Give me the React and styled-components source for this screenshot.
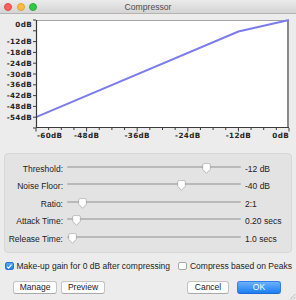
import React from "react";
import styled, { createGlobalStyle } from "styled-components";

const GlobalStyle = createGlobalStyle`
  html, body {
    margin: 0;
    padding: 0;
    background: #ececec;
  }
  * {
    box-sizing: border-box;
  }
`;

const Window = styled.div`
  position: relative;
  width: 296px;
  height: 300px;
  background: #ececec;
  overflow: hidden;
  font-family: "Liberation Sans", Arial, sans-serif;
  font-size: 8.5px;
  color: #222;
`;

const TitleBar = styled.div`
  display: grid;
  grid-template-columns: 1fr auto 1fr;
  align-items: center;
  height: 14px;
  background: linear-gradient(#ebebeb, #d4d4d4);
  border-bottom: 1px solid #b4b4b4;
  border-radius: 4px 4px 0 0;
`;

const Lights = styled.div`
  display: flex;
  gap: 4.5px;
  padding-left: 4px;
`;

const Light = styled.span`
  width: 8px;
  height: 8px;
  border-radius: 50%;
  background: ${(p) => p.color};
  border: 0.5px solid ${(p) => p.edge};
`;

const Title = styled.div`
  font-size: 8.6px;
  color: #4d4d4d;
`;

const Chart = styled.svg`
  display: block;
`;

const GroupBox = styled.div`
  display: grid;
  grid-template-columns: 58px 174px auto;
  grid-auto-rows: 17.5px;
  column-gap: 4px;
  align-items: center;
  height: 100px;
  margin: 2px 4px 0;
  padding-top: 6px;
  background: #e3e3e3;
  border: 1px solid #d7d7d7;
  border-radius: 4px;
`;

const SliderLabel = styled.div`
  text-align: right;
  white-space: nowrap;
`;

const Track = styled.div`
  position: relative;
  height: 100%;
  &::before {
    content: "";
    position: absolute;
    left: 0;
    right: 0;
    top: calc(50% - 3px);
    height: 2px;
    border-radius: 1px;
    background: #b9b9b9;
  }
`;

const Thumb = styled.svg`
  position: absolute;
  top: calc(50% - 6px);
  margin-left: -4.5px;
  filter: drop-shadow(0 0.5px 0.6px rgba(0, 0, 0, 0.35));
`;

const Value = styled.div`
  white-space: nowrap;
`;

const CheckRow = styled.div`
  display: flex;
  justify-content: space-between;
  align-items: center;
  height: 12px;
  margin-top: 7px;
  padding: 0 4px 0 5px;
`;

const CheckItem = styled.label`
  display: flex;
  align-items: center;
  gap: 3px;
  white-space: nowrap;
`;

const Box = styled.span`
  display: flex;
  align-items: center;
  justify-content: center;
  width: 8.5px;
  height: 8.5px;
  border-radius: 2px;
  background: ${(p) => (p.checked ? "linear-gradient(#5aa7f8, #2a7ef1)" : "#fff")};
  border: 0.5px solid ${(p) => (p.checked ? "#2a72d8" : "#a8a8a8")};
`;

const ButtonRow = styled.div`
  display: flex;
  justify-content: space-between;
  margin-top: 9px;
  padding: 0 15px 0 13px;
`;

const ButtonGroup = styled.div`
  display: flex;
  gap: ${(p) => p.gap}px;
`;

const Button = styled.button`
  width: ${(p) => p.w}px;
  height: 12.5px;
  padding: 0;
  font-family: "Liberation Sans", Arial, sans-serif;
  font-size: 8.5px;
  line-height: 11px;
  color: ${(p) => (p.primary ? "#fff" : "#222")};
  background: ${(p) =>
    p.primary ? "linear-gradient(#6cb1f9, #1a7ef4)" : "#fff"};
  border: 0.5px solid ${(p) => (p.primary ? "#2f80ea" : "#c4c4c4")};
  border-bottom-color: ${(p) => (p.primary ? "#1d6ad6" : "#aaa")};
  border-radius: 3px;
`;

const Grip = styled.svg`
  position: absolute;
  right: 0;
  bottom: 0;
`;

const X0 = 36;
const X1 = 289;
const Y0 = 20;
const Y1 = 128;
const xOf = (db) => X0 + ((db + 60) / 60) * (X1 - X0);
const yOf = (db) => Y0 + (-db / 60) * (Y1 - Y0);

function CurveChart() {
  const yTicks = [];
  for (let d = 0; d >= -60; d -= 6) yTicks.push(d);
  const xTicks = [];
  for (let d = -60; d <= 0; d += 3) xTicks.push(d);
  const yLabels = [-12, -18, -24, -30, -36, -42, -48, -54];
  const xLabels = [-60, -48, -36, -24, -12, 0];
  const labelStyle = {
    fontFamily: '"DejaVu Sans", Verdana, sans-serif',
    fontWeight: "bold",
    fontSize: "7.2px",
    letterSpacing: "0.35px",
    fill: "#262626",
  };
  const pts = [
    [xOf(-60), yOf(-54)],
    [xOf(-12), yOf(-6.4)],
    [xOf(0), yOf(0)],
  ]
    .map((p) => p.join(","))
    .join(" ");

  return (
    <Chart width="296" height="137" viewBox="0 14 296 137">
      <rect x={X0} y={Y0} width={X1 - X0} height={Y1 - Y0} fill="#fff" />
      <line x1={X0} y1={Y0 + 0.5} x2={X1} y2={Y0 + 0.5} stroke="#a3a3a3" />
      <line x1={X1 - 1} y1={Y0} x2={X1 - 1} y2={Y1} stroke="#8a8a8a" strokeWidth="2" />
      <polyline points={pts} fill="none" stroke="#7c7cee" strokeWidth="2" />
      <line x1={X0 + 0.5} y1={Y0} x2={X0 + 0.5} y2={Y1} stroke="#3a3a3a" strokeWidth="1.2" />
      <line x1={X0} y1={Y1 - 0.5} x2={X1} y2={Y1 - 0.5} stroke="#3a3a3a" strokeWidth="1.2" />
      {yTicks.map((d) => (
        <line key={d} x1={X0 - 3} y1={yOf(d)} x2={X0} y2={yOf(d)} stroke="#3a3a3a" />
      ))}
      {xTicks.map((d) => (
        <line
          key={d}
          x1={xOf(d)}
          y1={Y1}
          x2={xOf(d)}
          y2={Y1 + (d % 12 === 0 ? 3.5 : 2)}
          stroke="#3a3a3a"
        />
      ))}
      <text x="32" y="26.5" textAnchor="end" style={labelStyle}>0dB</text>
      {yLabels.map((d) => (
        <text key={d} x="32" y={yOf(d) + 2.6} textAnchor="end" style={labelStyle}>
          {d}dB
        </text>
      ))}
      {xLabels.map((d) => (
        <text
          key={d}
          x={d === -60 ? X0 + 1 : d === 0 ? X1 : xOf(d)}
          y="137.5"
          textAnchor={d === -60 ? "start" : d === 0 ? "end" : "middle"}
          style={labelStyle}
        >
          {d}dB
        </text>
      ))}
    </Chart>
  );
}

const sliders = [
  { label: "Threshold:", pos: 0.8, value: "-12 dB" },
  { label: "Noise Floor:", pos: 0.66, value: "-40 dB" },
  { label: "Ratio:", pos: 0.087, value: "2:1" },
  { label: "Attack Time:", pos: 0.052, value: "0.20 secs" },
  { label: "Release Time:", pos: 0.03, value: "1.0 secs" },
];

function SliderThumb({ pos }) {
  return (
    <Thumb width="9" height="11" viewBox="0 0 9 11" style={{ left: `${pos * 100}%` }}>
      <path
        d="M0.8 2 Q0.8 0.6 2.2 0.6 H6.8 Q8.2 0.6 8.2 2 V6.2 L4.5 10.2 L0.8 6.2 Z"
        fill="#fff"
        stroke="#b3b3b3"
        strokeWidth="0.5"
      />
    </Thumb>
  );
}

function Check() {
  return (
    <svg width="7" height="7" viewBox="0 0 7 7">
      <path d="M1.2 3.7 L2.8 5.3 L5.9 1.4" fill="none" stroke="#fff" strokeWidth="1.2" />
    </svg>
  );
}

export default function App() {
  return (
    <>
      <GlobalStyle />
      <Window>
        <TitleBar>
          <Lights>
            <Light color="#fc605b" edge="#de4a45" />
            <Light color="#fdbc40" edge="#dea236" />
            <Light color="#34c84a" edge="#2aac3c" />
          </Lights>
          <Title>Compressor</Title>
          <div />
        </TitleBar>
        <CurveChart />
        <GroupBox>
          {sliders.map((s) => (
            <React.Fragment key={s.label}>
              <SliderLabel>{s.label}</SliderLabel>
              <Track>
                <SliderThumb pos={s.pos} />
              </Track>
              <Value>{s.value}</Value>
            </React.Fragment>
          ))}
        </GroupBox>
        <CheckRow>
          <CheckItem>
            <Box checked>
              <Check />
            </Box>
            Make-up gain for 0 dB after compressing
          </CheckItem>
          <CheckItem>
            <Box />
            Compress based on Peaks
          </CheckItem>
        </CheckRow>
        <ButtonRow>
          <ButtonGroup gap={4}>
            <Button w={44}>Manage</Button>
            <Button w={44}>Preview</Button>
          </ButtonGroup>
          <ButtonGroup gap={8}>
            <Button w={42}>Cancel</Button>
            <Button w={44} primary>
              OK
            </Button>
          </ButtonGroup>
        </ButtonRow>
        <Grip width="8" height="8" viewBox="0 0 8 8">
          <path d="M7.5 2 L2 7.5 M7.5 5 L5 7.5" stroke="#9a9a9a" strokeWidth="0.6" />
        </Grip>
      </Window>
    </>
  );
}
